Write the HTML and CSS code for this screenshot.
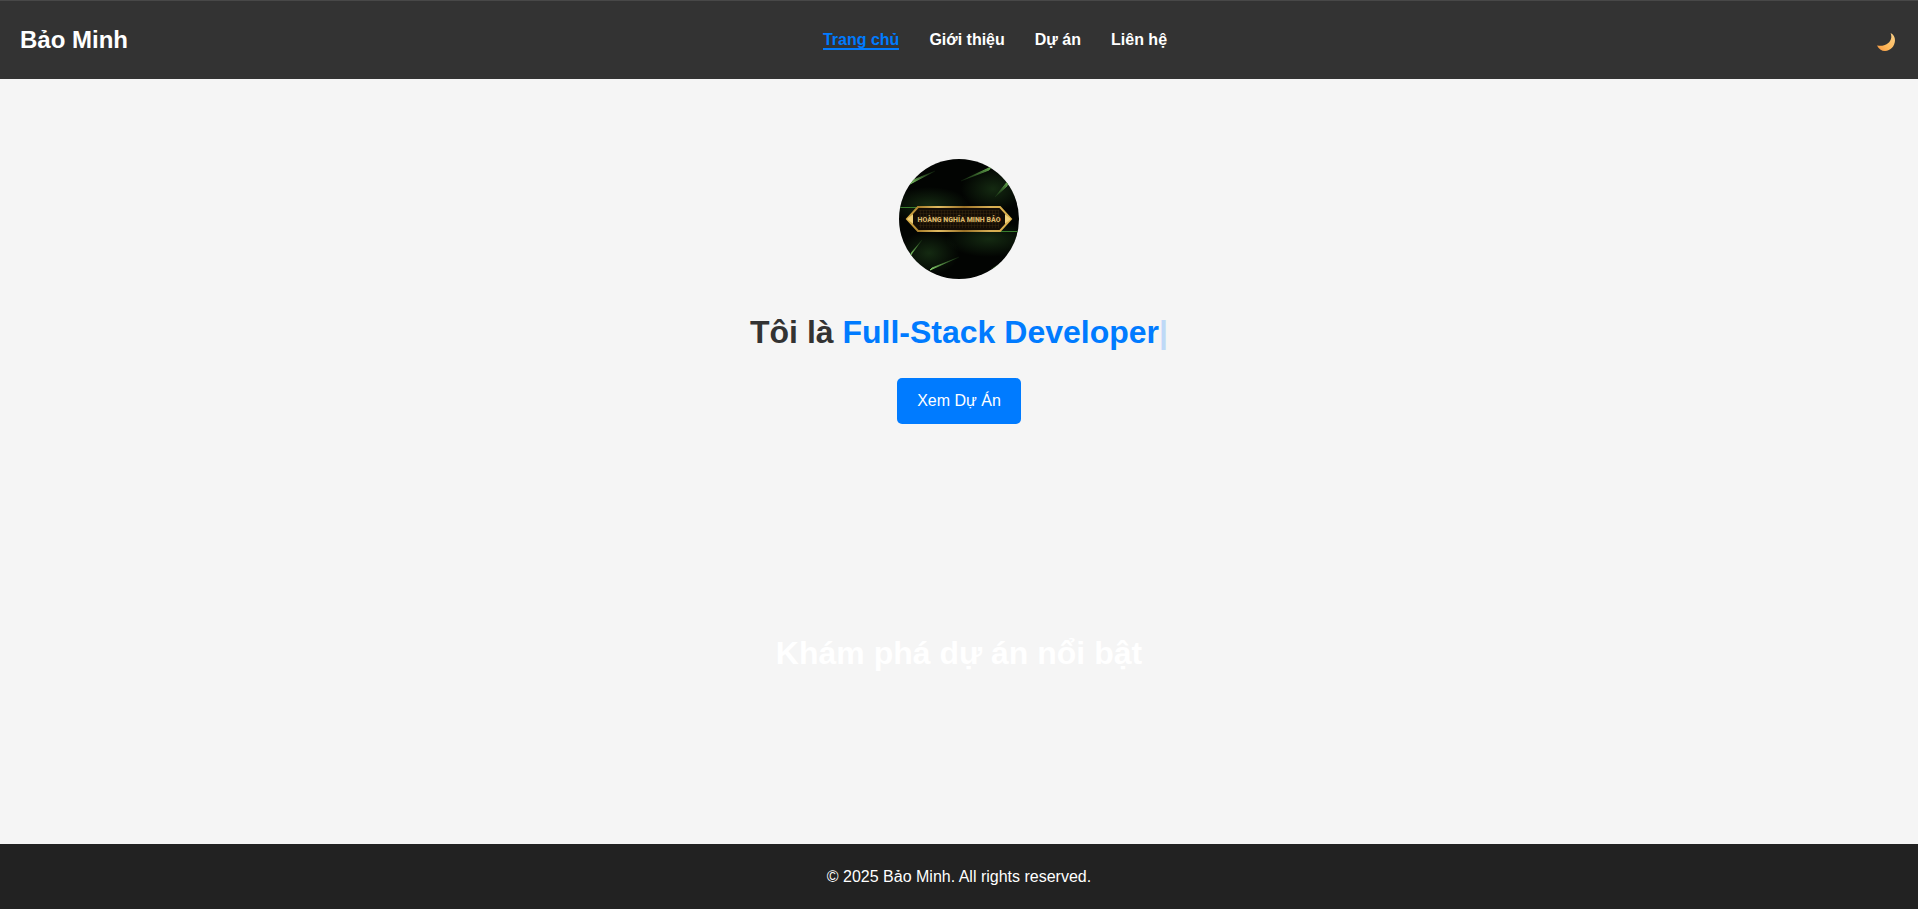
FILE: index.html
```html
<!DOCTYPE html>
<html lang="vi">
<head>
<meta charset="utf-8">
<meta name="viewport" content="width=device-width, initial-scale=1">
<title>Bảo Minh</title>
<link rel="stylesheet" href="styles.css">
</head>
<body>
<header class="header">
  <div class="logo">Bảo Minh</div>
  <nav class="nav">
    <a class="nav-link active" href="#home">Trang chủ</a>
    <a class="nav-link" href="#about">Giới thiệu</a>
    <a class="nav-link" href="#projects">Dự án</a>
    <a class="nav-link" href="#contact">Liên hệ</a>
  </nav>
  <button class="theme-toggle" type="button" aria-label="Chế độ tối">
    <svg class="moon" viewBox="0 0 18 18" aria-hidden="true">
      <defs><linearGradient id="moonFill" x1="0" y1="1" x2="1" y2="0"><stop offset="0" stop-color="#f6943f"/><stop offset=".4" stop-color="#ffb95a"/><stop offset="1" stop-color="#f8d08a"/></linearGradient></defs>
      <path fill="url(#moonFill)" d="M13.6 0C16.500 1.300 18 4 18 7.300C18 13 13.500 18 8 18C4.600 18 1.600 16 0 12.500C2 12.600 4 13 6.200 12.600C11 11.700 14.700 7.500 14.300 3C14.200 1.800 13.900 1 13.600 0Z"/>
    </svg>
  </button>
</header>
<main class="main">
  <section class="hero" id="home">
    <svg class="avatar" viewBox="0 0 120 120" role="img" aria-label="Hoàng Nghĩa Minh Bảo">
      <defs>
        <radialGradient id="glow"><stop offset="0" stop-color="#1c3a18" stop-opacity=".7"/><stop offset="1" stop-color="#1c3a18" stop-opacity="0"/></radialGradient>
        <linearGradient id="gold" x1="0" y1="0" x2="1" y2="0"><stop offset="0" stop-color="#d9ad45"/><stop offset=".12" stop-color="#a9802d"/><stop offset=".3" stop-color="#e0bb62"/><stop offset=".55" stop-color="#9a7228"/><stop offset=".8" stop-color="#d6ae55"/><stop offset="1" stop-color="#d9ad45"/></linearGradient>
        <linearGradient id="ray" x1="0" y1="1" x2="1" y2="0"><stop offset="0" stop-color="#86cf6c"/><stop offset="1" stop-color="#28551f" stop-opacity=".1"/></linearGradient>
        <linearGradient id="rayUp" x1="1" y1="0" x2="0" y2="1"><stop offset="0" stop-color="#6cb254"/><stop offset="1" stop-color="#28551f" stop-opacity=".1"/></linearGradient>
        <pattern id="mesh" width="3" height="3" patternUnits="userSpaceOnUse"><path d="M0 0H3M0 0V3" stroke="#4a3612"/></pattern>
      </defs>
      <rect width="120" height="120" fill="#020402"/>
      <ellipse cx="30" cy="46" rx="40" ry="18" fill="url(#glow)"/>
      <ellipse cx="90" cy="80" rx="44" ry="18" fill="url(#glow)"/>
      <ellipse cx="30" cy="94" rx="30" ry="22" fill="url(#glow)"/>
      <ellipse cx="94" cy="30" rx="32" ry="22" fill="url(#glow)"/>
      <path d="M11 25L36 12L12 22Z" fill="url(#ray)" stroke="url(#ray)"/>
      <path d="M62 22L92 8L90 11Z" fill="url(#rayUp)" stroke="url(#rayUp)"/>
      <path d="M96 38L109 22L108 27Z" fill="url(#rayUp)" stroke="url(#rayUp)"/>
      <path d="M11 97L23 81L13 93Z" fill="url(#ray)" stroke="url(#ray)"/>
      <path d="M31 111L60 98L33 109Z" fill="url(#ray)" stroke="url(#ray)"/>
      <path d="M92 110L106 102L104 105Z" fill="url(#rayUp)" stroke="url(#rayUp)"/>
      <path d="M0 48.500H24M98 72.500H120" stroke="#397d2e"/>
      <path d="M19 48H101L112 60L101 72H19L8 60Z" fill="#140d05" stroke="url(#gold)" stroke-width="2"/>
      <path d="M20 51H100V69H20Z" fill="url(#mesh)" opacity=".6"/>
      <path d="M8 60L14 55V65ZM112 60L106 55V65Z" fill="#f0d078"/>
      <text class="avatar-name" x="60" y="63" text-anchor="middle">HOÀNG NGHĨA MINH BẢO</text>
    </svg>
    <h1 class="heading">Tôi là <span class="typed">Full-Stack Developer</span><span class="cursor">|</span></h1>
    <a class="button" href="#projects">Xem Dự Án</a>
  </section>
  <section class="featured" id="projects">
    <h2 class="heading featured-title">Khám phá dự án nổi bật</h2>
  </section>
</main>
<footer class="footer">© 2025 Bảo Minh. All rights reserved.</footer>
</body>
</html>
```
FILE: styles.css
```css
* { box-sizing: border-box; margin: 0; }
body {
  display: flex;
  flex-direction: column;
  min-height: 100vh;
  background: #f5f5f5;
  color: #333;
  font: 16px/25px "Liberation Sans", Arial, sans-serif;
}
.header {
  display: flex;
  align-items: center;
  justify-content: space-between;
  padding: 20px;
  border-top: 1px solid #484848;
  background: #333;
  color: #fff;
}
.logo { font-size: 24px; font-weight: bold; line-height: 38px; }
.nav { display: flex; gap: 30px; }
.nav-link {
  padding-top: 2px;
  border-bottom: 2px solid transparent;
  color: #fff;
  font-weight: bold;
  line-height: 16px;
  text-decoration: none;
}
.nav-link.active { border-color: #007bff; color: #007bff; }
.theme-toggle {
  display: flex;
  padding: 4px 3px 0 15px;
  border: 0;
  background: none;
  cursor: pointer;
}
.moon { width: 18px; height: 18px; }
.main { flex: 1; }
.hero {
  display: flex;
  flex-direction: column;
  align-items: center;
  padding: 80px 20px;
  text-align: center;
}
.avatar { width: 120px; height: 120px; margin-bottom: 27px; border-radius: 50%; }
.avatar-name { fill: #d8b568; font: 900 7px Roboto, "Liberation Sans", sans-serif; }
.heading { font-size: 32px; font-weight: bold; line-height: 52px; }
.typed { color: #007bff; }
.cursor { color: #007bff; opacity: 0.22; }
.button {
  margin-top: 20px;
  padding: 10px 20px 11px;
  border-radius: 5px;
  background: #007bff;
  color: #fff;
  text-decoration: none;
}
.featured {
  display: flex;
  align-items: center;
  justify-content: center;
  min-height: 298px;
  padding: 20px;
}
.featured-title { color: #fff; }
.footer { padding: 20px; background: #222; color: #fff; text-align: center; }
```
